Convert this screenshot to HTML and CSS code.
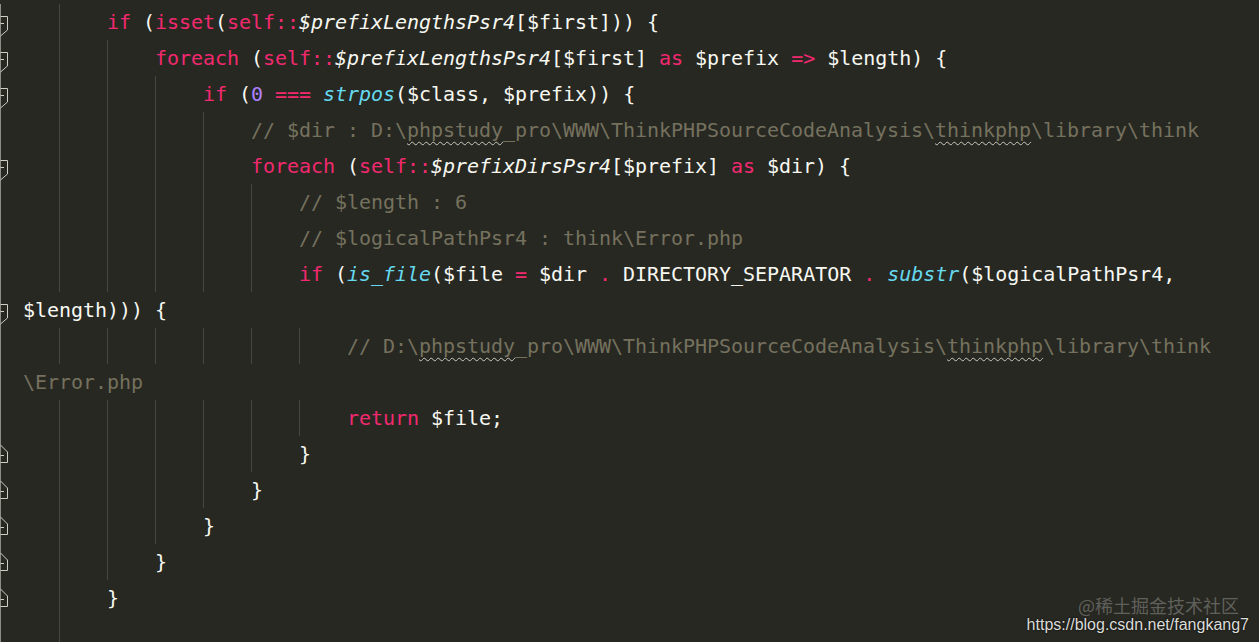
FILE: index.html
```html
<!DOCTYPE html>
<html>
<head>
<meta charset="utf-8">
<link rel="stylesheet" href="styles.css">
</head>
<body>
<div class="editor">
  <div class="lines">
    <div class="row"><span class="gut"><svg class="fold" width="11" height="36"><path class="edge" d="M0.5,0 V36"/><path d="M0.5,12.5 H7.5 V26 L0.5,32 M0.5,19.5 H4"/></svg></span><span class="code"><i class="ind"></i><i class="ind g"></i><span class="k">if</span> (<span class="k">isset</span>(<span class="k">self::</span><span class="v">$prefixLengthsPsr4</span>[$first])) {</span></div>
    <div class="row"><span class="gut"><svg class="fold" width="11" height="36"><path class="edge" d="M0.5,0 V36"/><path d="M0.5,12.5 H7.5 V26 L0.5,32 M0.5,19.5 H4"/></svg></span><span class="code"><i class="ind"></i><i class="ind g"></i><i class="ind g"></i><span class="k">foreach</span> (<span class="k">self::</span><span class="v">$prefixLengthsPsr4</span>[$first] <span class="k">as</span> $prefix <span class="k">=&gt;</span> $length) {</span></div>
    <div class="row"><span class="gut"><svg class="fold" width="11" height="36"><path class="edge" d="M0.5,0 V36"/><path d="M0.5,12.5 H7.5 V26 L0.5,32 M0.5,19.5 H4"/></svg></span><span class="code"><i class="ind"></i><i class="ind g"></i><i class="ind g"></i><i class="ind g"></i><span class="k">if</span> (<span class="n">0</span> <span class="k">===</span> <span class="f">strpos</span>($class, $prefix)) {</span></div>
    <div class="row"><span class="gut"><svg class="fold" width="11" height="36"><path class="edge" d="M0.5,0 V36"/></svg></span><span class="code"><i class="ind"></i><i class="ind g"></i><i class="ind g"></i><i class="ind g"></i><i class="ind g"></i><span class="c">// $dir : D:\<span class="sp">phpstudy</span>_pro\WWW\ThinkPHPSourceCodeAnalysis\<span class="sp">thinkphp</span>\library\think</span></span></div>
    <div class="row"><span class="gut"><svg class="fold" width="11" height="36"><path class="edge" d="M0.5,0 V36"/><path d="M0.5,12.5 H7.5 V26 L0.5,32 M0.5,19.5 H4"/></svg></span><span class="code"><i class="ind"></i><i class="ind g"></i><i class="ind g"></i><i class="ind g"></i><i class="ind g"></i><span class="k">foreach</span> (<span class="k">self::</span><span class="v">$prefixDirsPsr4</span>[$prefix] <span class="k">as</span> $dir) {</span></div>
    <div class="row"><span class="gut"><svg class="fold" width="11" height="36"><path class="edge" d="M0.5,0 V36"/></svg></span><span class="code"><i class="ind"></i><i class="ind g"></i><i class="ind g"></i><i class="ind g"></i><i class="ind g"></i><i class="ind g"></i><span class="c">// $length : 6</span></span></div>
    <div class="row"><span class="gut"><svg class="fold" width="11" height="36"><path class="edge" d="M0.5,0 V36"/></svg></span><span class="code"><i class="ind"></i><i class="ind g"></i><i class="ind g"></i><i class="ind g"></i><i class="ind g"></i><i class="ind g"></i><span class="c">// $logicalPathPsr4 : think\Error.php</span></span></div>
    <div class="row"><span class="gut"><svg class="fold" width="11" height="36"><path class="edge" d="M0.5,0 V36"/></svg></span><span class="code"><i class="ind"></i><i class="ind g"></i><i class="ind g"></i><i class="ind g"></i><i class="ind g"></i><i class="ind g"></i><span class="k">if</span> (<span class="f">is_file</span>($file <span class="k">=</span> $dir <span class="k">.</span> DIRECTORY_SEPARATOR <span class="k">.</span> <span class="f">substr</span>($logicalPathPsr4,</span></div>
    <div class="row"><span class="gut"><svg class="fold" width="11" height="36"><path class="edge" d="M0.5,0 V36"/><path d="M0.5,12.5 H7.5 V26 L0.5,32 M0.5,19.5 H4"/></svg></span><span class="code wrap">$length))) {</span></div>
    <div class="row"><span class="gut"><svg class="fold" width="11" height="36"><path class="edge" d="M0.5,0 V36"/></svg></span><span class="code"><i class="ind"></i><i class="ind g"></i><i class="ind g"></i><i class="ind g"></i><i class="ind g"></i><i class="ind g"></i><i class="ind g"></i><span class="c">// D:\<span class="sp">phpstudy</span>_pro\WWW\ThinkPHPSourceCodeAnalysis\<span class="sp">thinkphp</span>\library\think</span></span></div>
    <div class="row"><span class="gut"><svg class="fold" width="11" height="36"><path class="edge" d="M0.5,0 V36"/></svg></span><span class="code wrap"><span class="c">\Error.php</span></span></div>
    <div class="row"><span class="gut"><svg class="fold" width="11" height="36"><path class="edge" d="M0.5,0 V36"/></svg></span><span class="code"><i class="ind"></i><i class="ind g"></i><i class="ind g"></i><i class="ind g"></i><i class="ind g"></i><i class="ind g"></i><i class="ind g"></i><span class="k">return</span> $file;</span></div>
    <div class="row"><span class="gut"><svg class="fold" width="11" height="36"><path class="edge" d="M0.5,0 V36"/><path d="M0.5,9 L7.5,16 V26.5 H0.5 M0.5,19.5 H4"/></svg></span><span class="code"><i class="ind"></i><i class="ind g"></i><i class="ind g"></i><i class="ind g"></i><i class="ind g"></i><i class="ind g"></i>}</span></div>
    <div class="row"><span class="gut"><svg class="fold" width="11" height="36"><path class="edge" d="M0.5,0 V36"/><path d="M0.5,9 L7.5,16 V26.5 H0.5 M0.5,19.5 H4"/></svg></span><span class="code"><i class="ind"></i><i class="ind g"></i><i class="ind g"></i><i class="ind g"></i><i class="ind g"></i>}</span></div>
    <div class="row"><span class="gut"><svg class="fold" width="11" height="36"><path class="edge" d="M0.5,0 V36"/><path d="M0.5,9 L7.5,16 V26.5 H0.5 M0.5,19.5 H4"/></svg></span><span class="code"><i class="ind"></i><i class="ind g"></i><i class="ind g"></i><i class="ind g"></i>}</span></div>
    <div class="row"><span class="gut"><svg class="fold" width="11" height="36"><path class="edge" d="M0.5,0 V36"/><path d="M0.5,9 L7.5,16 V26.5 H0.5 M0.5,19.5 H4"/></svg></span><span class="code"><i class="ind"></i><i class="ind g"></i><i class="ind g"></i>}</span></div>
    <div class="row"><span class="gut"><svg class="fold" width="11" height="36"><path class="edge" d="M0.5,0 V36"/><path d="M0.5,9 L7.5,16 V26.5 H0.5 M0.5,19.5 H4"/></svg></span><span class="code"><i class="ind"></i><i class="ind g"></i>}</span></div>
    <div class="row"><span class="gut"><svg class="fold" width="11" height="36"><path class="edge" d="M0.5,0 V36"/></svg></span><span class="code"><i class="ind"></i><i class="ind g"></i></span></div>
  </div>
  <div class="watermark">
    <div class="wm-site">@稀土掘金技术社区</div>
    <div class="wm-url">https://blog.csdn.net/fangkang7</div>
  </div>
</div>
</body>
</html>
```

FILE: styles.css
```css
html, body {
  margin: 0;
  padding: 0;
  background: #272822;
}

.editor {
  position: relative;
  width: 1259px;
  height: 642px;
  overflow: hidden;
  background: #272822;
}

.lines {
  display: flex;
  flex-direction: column;
  padding-top: 4px;
}

.row {
  display: flex;
  height: 36px;
  flex: 0 0 36px;
}

.gut {
  flex: 0 0 11px;
  width: 11px;
  height: 36px;
}

.fold {
  display: block;
}

.fold path {
  fill: none;
  stroke: #cfcfc6;
  stroke-width: 1;
}

.fold path.edge {
  stroke: #8e8e86;
}

.code {
  font-family: "DejaVu Sans Mono", "Liberation Mono", monospace;
  font-size: 20px;
  letter-spacing: -0.04px;
  line-height: 36px;
  height: 36px;
  white-space: pre;
  color: #f8f8f2;
}

.code.wrap {
  padding-left: 12px;
}

.ind {
  display: inline-block;
  width: 48px;
  height: 36px;
  vertical-align: top;
}

.ind.g {
  background: linear-gradient(#46473f, #46473f) 0 0 / 1px 100% no-repeat;
}

.k {
  color: #f2296f;
}

.v {
  font-style: italic;
  color: #f8f8f2;
}

.f {
  font-style: italic;
  color: #66d9ef;
}

.n {
  color: #ae81ff;
}

.c {
  color: #75715e;
}

.sp {
  text-decoration-line: underline;
  text-decoration-style: wavy;
  text-decoration-color: #c9c9bf;
  text-decoration-thickness: 1px;
  text-underline-offset: 4px;
}

.watermark {
  position: absolute;
  right: 10px;
  bottom: 8px;
  display: flex;
  flex-direction: column;
  align-items: flex-end;
}

.wm-site {
  font-family: "Noto Sans CJK SC", "Noto Sans", sans-serif;
  font-size: 18px;
  line-height: 22px;
  color: rgba(170, 170, 165, 0.45);
  margin-right: 10px;
}

.wm-url {
  font-family: "Liberation Sans", Arial, sans-serif;
  font-size: 16px;
  line-height: 18px;
  color: #dcdcd8;
  text-shadow: 0 0 2px #000;
}
```
